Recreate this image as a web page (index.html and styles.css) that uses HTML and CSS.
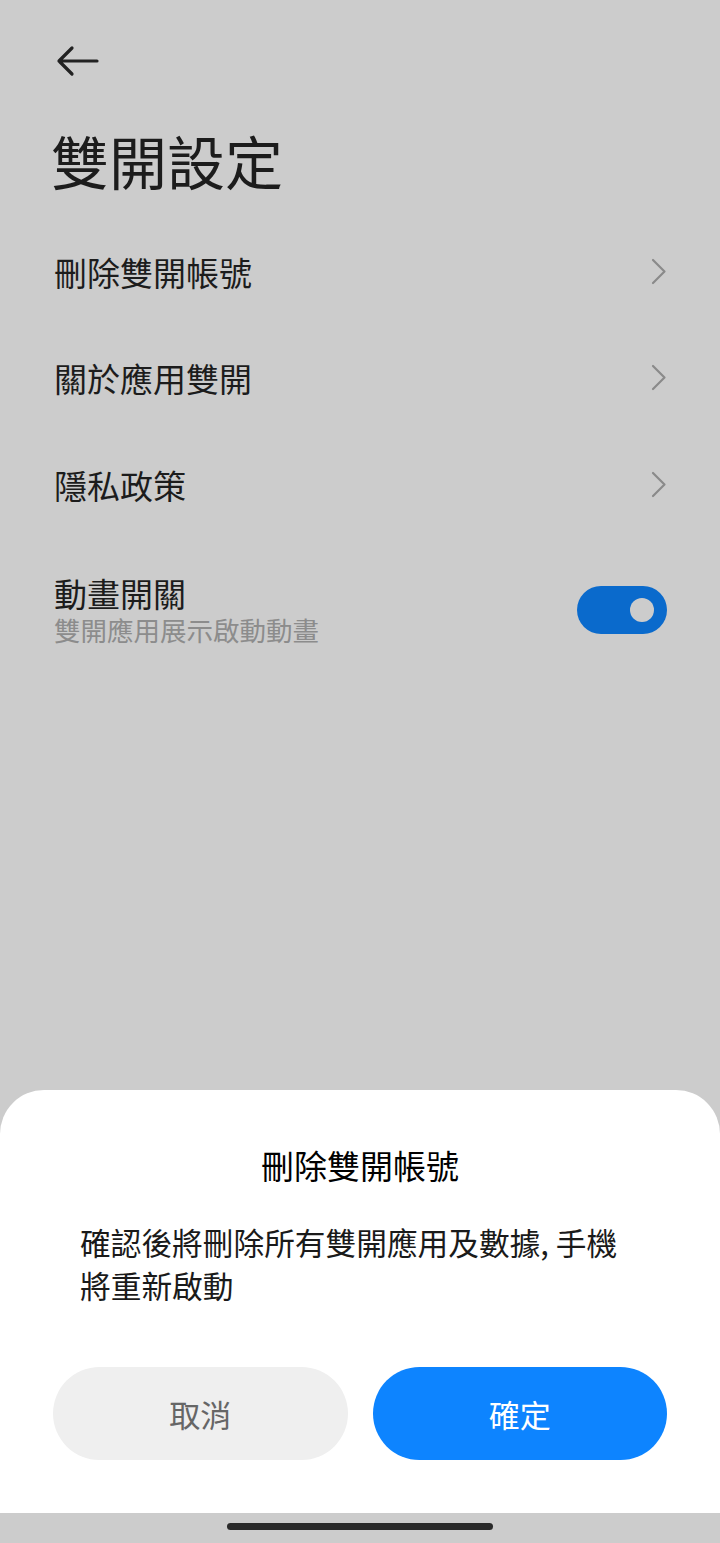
FILE: index.html
```html
<!DOCTYPE html>
<html lang="zh-Hant">
<head>
<meta charset="utf-8">
<title>雙開設定</title>
<link rel="stylesheet" href="styles.css">
</head>
<body>
<div class="page">
  <div class="header">
    <svg class="back" width="50" height="44" viewBox="0 0 50 44">
      <path d="M7 21 H45 M20 8 L7 21 L20 34" fill="none" stroke="#222" stroke-width="3.2" stroke-linecap="round" stroke-linejoin="round"/>
    </svg>
  </div>
  <h1 class="title">雙開設定</h1>
  <div class="list">
    <div class="row">
      <span class="row-label">刪除雙開帳號</span>
      <svg class="chev" width="16" height="28" viewBox="0 0 16 28"><path d="M2 2 L13.5 13.5 L2 25" fill="none" stroke="#8a8a8a" stroke-width="2.2" stroke-linecap="round" stroke-linejoin="round"/></svg>
    </div>
    <div class="row">
      <span class="row-label">關於應用雙開</span>
      <svg class="chev" width="16" height="28" viewBox="0 0 16 28"><path d="M2 2 L13.5 13.5 L2 25" fill="none" stroke="#8a8a8a" stroke-width="2.2" stroke-linecap="round" stroke-linejoin="round"/></svg>
    </div>
    <div class="row">
      <span class="row-label">隱私政策</span>
      <svg class="chev" width="16" height="28" viewBox="0 0 16 28"><path d="M2 2 L13.5 13.5 L2 25" fill="none" stroke="#8a8a8a" stroke-width="2.2" stroke-linecap="round" stroke-linejoin="round"/></svg>
    </div>
    <div class="row row-toggle">
      <div class="row-text">
        <div class="row-label">動畫開關</div>
        <div class="row-sub">雙開應用展示啟動動畫</div>
      </div>
      <div class="toggle"><span class="knob"></span></div>
    </div>
  </div>

  <div class="sheet">
    <div class="sheet-title">刪除雙開帳號</div>
    <div class="sheet-body">確認後將刪除所有雙開應用及數據, 手機將重新啟動</div>
    <div class="buttons">
      <div class="btn btn-cancel">取消</div>
      <div class="btn btn-ok">確定</div>
    </div>
  </div>
  <div class="navbar"><span class="indicator"></span></div>
</div>
</body>
</html>
```

FILE: styles.css
```css
* { box-sizing: border-box; }
html, body { margin: 0; padding: 0; }
body {
  background: #cccccc;
  font-family: "Noto Sans CJK TC", "Noto Sans", sans-serif;
  color: #1c1c1c;
}
.page {
  width: 720px;
  height: 1543px;
  display: flex;
  flex-direction: column;
  overflow: hidden;
}
.header {
  padding: 40px 0 0 52px;
  height: 84px;
}
.back { display: block; }
.title {
  margin: 36px 0 0 0;
  padding-left: 51px;
  font-size: 58px;
  font-weight: 400;
  line-height: 80px;
  height: 80px;
  color: #1c1c1c;
}
.list {
  margin-top: 18.5px;
}
.row {
  height: 106.5px;
  padding: 0 54px;
  display: flex;
  align-items: center;
  justify-content: space-between;
}
.row-label {
  font-size: 33px;
  line-height: 40px;
  color: #1c1c1c;
}
.chev { display: block; margin-right: -1px; }
.row-toggle {
  height: auto;
  padding-top: 35px;
}
.row-sub {
  font-size: 26.5px;
  line-height: 34px;
  color: #8c8c8c;
}
.toggle {
  width: 90px;
  height: 48px;
  border-radius: 24px;
  background: #0a6acc;
  display: flex;
  align-items: center;
  justify-content: flex-end;
  padding-right: 13px;
  margin-right: -1px;
}
.knob {
  width: 24px;
  height: 24px;
  border-radius: 50%;
  background: #cccccc;
}
.sheet {
  margin-top: auto;
  background: #ffffff;
  border-radius: 44px 44px 0 0;
  padding: 52px 53px 53px 53px;
}
.sheet-title {
  text-align: center;
  font-size: 33px;
  line-height: 46px;
  color: #000;
}
.sheet-body {
  margin-top: 31.5px;
  padding: 0 27px;
  width: 614px;
  font-size: 30.7px;
  line-height: 43px;
  color: #1a1a1a;
}
.buttons {
  margin-top: 61.5px;
  display: flex;
  gap: 25px;
}
.btn {
  flex: 1;
  height: 93px;
  border-radius: 46.5px;
  display: flex;
  align-items: center;
  justify-content: center;
  font-size: 31px;
}
.btn-cancel {
  background: #efefef;
  color: #666666;
}
.btn-ok {
  background: #0d84ff;
  color: #ffffff;
}
.navbar {
  height: 30px;
  background: #cccccc;
  display: flex;
  justify-content: center;
  padding-top: 10px;
}
.indicator {
  width: 266px;
  height: 7px;
  border-radius: 4px;
  background: #2a2a2a;
}
```
